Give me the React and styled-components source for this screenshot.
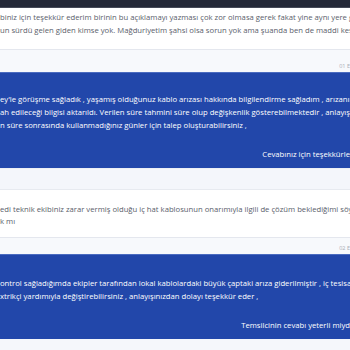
import React from "react";
import styled, { createGlobalStyle } from "styled-components";

const Global = createGlobalStyle`
  html, body {
    margin: 0;
    padding: 0;
    background: #f5f7fb;
    font-family: "Open Sans", "Noto Sans", sans-serif;
  }
`;

const Page = styled.div`
  width: 350px;
  height: 350px;
  overflow: hidden;
  background: #f5f7fb;
`;

const TopBar = styled.div`
  height: 7px;
  background: #242938;
  border-bottom: 1px solid #454a58;
`;

const Message = styled.div`
  background: #fff;
  border-top: ${({ $top }) => ($top ? "1px solid #e7eaf0" : "none")};
  border-bottom: 1px solid #e4e7ee;
  padding: ${({ $pad }) => $pad};
`;

const Line = styled.div`
  font-size: 7.7px;
  line-height: ${({ $lh }) => $lh || "13px"};
  white-space: nowrap;
  overflow: hidden;
  color: ${({ $light }) => ($light ? "#ffffff" : "#5a606b")};
`;

const Meta = styled.div`
  height: ${({ $h }) => $h};
  display: flex;
  align-items: flex-end;
  justify-content: flex-end;
  padding-bottom: 2px;
  box-sizing: border-box;
  background: #f7f9fc;
`;

const Date = styled.span`
  font-size: 5.5px;
  color: #a9adb5;
  line-height: 8px;
  white-space: nowrap;
`;

const Reply = styled.div`
  background: #2247aa;
  border-top: 1px solid #4b6cc0;
  padding: ${({ $pad }) => $pad};
  display: flex;
  flex-direction: column;
`;

const Footer = styled.div`
  margin-top: ${({ $mt }) => $mt};
  font-size: 7.7px;
  line-height: 13px;
  color: #fff;
  white-space: nowrap;
  text-align: right;
`;

const Gap = styled.div`
  height: ${({ $h }) => $h};
  background: #f4f6fb;
  border-top: 1px solid #eceff5;
`;

const App = () => (
  <Page>
    <Global />
    <TopBar />
    <Message $pad="3px 0 12px">
      <Line>biniz için teşekkür ederim birinin bu açıklamayı yazması çok zor olmasa gerek fakat yine aynı yere gelen</Line>
      <Line>un sürdü gelen giden kimse yok. Mağduriyetim şahsi olsa sorun yok ama şuanda ben de maddi kes</Line>
    </Message>
    <Meta $h="22px">
      <Date>01 E</Date>
    </Meta>
    <Reply $pad="20px 0 7px">
      <Line $light>ey'le görüşme sağladık , yaşamış olduğunuz kablo arızası hakkında bilgilendirme sağladım , arızanın</Line>
      <Line $light>ah edileceği bilgisi aktarıldı. Verilen süre tahmini süre olup değişkenlik gösterebilmektedir , anlayışınız</Line>
      <Line $light>n süre sonrasında kullanmadığınız günler için talep oluşturabilirsiniz ,</Line>
      <Footer $mt="16px">Cevabınız için teşekkürle</Footer>
    </Reply>
    <Gap $h="20px" />
    <Message $top $pad="13px 0 10px">
      <Line $lh="12px">edi teknik ekibiniz zarar vermiş olduğu iç hat kablosunun onarımıyla ilgili de çözüm beklediğimi söyle</Line>
      <Line $lh="12px">k mı</Line>
    </Message>
    <Meta $h="16px">
      <Date>02 E</Date>
    </Meta>
    <Reply $pad="22px 0 7px">
      <Line $light>ontrol sağladığımda ekipler tarafından lokal kablolardaki büyük çaptaki arıza giderilmiştir , iç tesisat</Line>
      <Line $light>xtrikçi yardımıyla değiştirebilirsiniz , anlayışınızdan dolayı teşekkür eder ,</Line>
      <Footer $mt="16px">Temsilcinin cevabı yeterli miyd</Footer>
    </Reply>
  </Page>
);

export default App;
